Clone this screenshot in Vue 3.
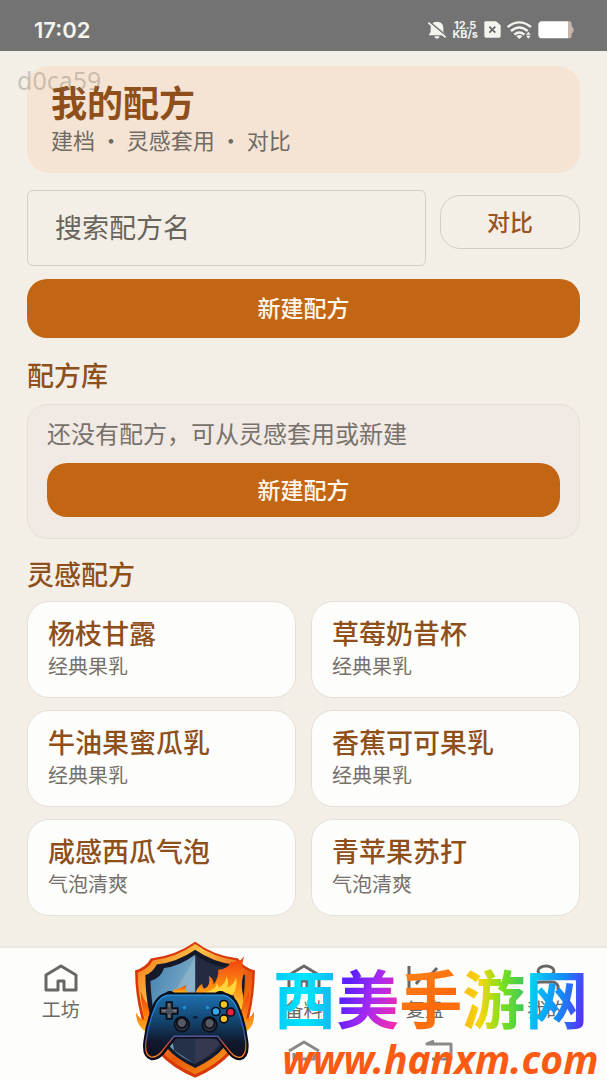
<script setup>
import { ref } from 'vue'

const keyword = ref('')

const recipes = [
  { name: '杨枝甘露', type: '经典果乳' },
  { name: '草莓奶昔杯', type: '经典果乳' },
  { name: '牛油果蜜瓜乳', type: '经典果乳' },
  { name: '香蕉可可果乳', type: '经典果乳' },
  { name: '咸感西瓜气泡', type: '气泡清爽' },
  { name: '青苹果苏打', type: '气泡清爽' },
]

const house = 'M3 11 L18 2 L33 11 V26 H21 V17 H15 V26 H3 Z'
const tabs = [
  { label: '工坊', icon: house },
  { label: '配方', icon: 'M8 3 H28 V26 H8 Z M13 10 H23 M13 16 H23' },
  { label: '备料', icon: house },
  { label: '复盘', icon: 'M2 2 V26 H34 M9 20 L16 11 L20 15 L30 4' },
  { label: '我的', icon: 'M18 2 A8 5 0 1 1 18 12 A8 5 0 1 1 18 2 M6 26 V22 Q8 18 12 18 H24 Q28 18 30 22 V26' },
]

const siteName = [
  { text: '西', tone: 'cyan' },
  { text: '美', tone: 'purple' },
  { text: '手', tone: 'orange' },
  { text: '游', tone: 'lime' },
  { text: '网', tone: 'blue' },
]
</script>

<template>
  <div class="page">
    <header class="status">
      <span class="time">17:02</span>
      <div class="indicators">
        <svg width="18" height="18" viewBox="0 0 54 54">
          <path d="M27 2 C40 2 46 11 46 20 V32 L53 43 H2 L8 32 V20 C8 11 14 2 27 2 Z M19 46 H35 Q34 53 27 53 Q20 53 19 46 Z" fill="#f4f3ee" />
          <path d="M4 2 L54 44" stroke="#737373" stroke-width="5" />
          <path d="M1 5 L53 49" stroke="#f4f3ee" stroke-width="5" />
        </svg>
        <span class="speed">12.5<br>KB/s</span>
        <svg width="17" height="17" viewBox="0 0 51 51">
          <path d="M5 1 H36 L50 13 V45 Q50 50 45 50 H6 Q1 50 1 45 V5 Q1 1 5 1 Z" fill="#f4f3ee" />
          <path d="M16 17 L34 35 M34 17 L16 35" stroke="#666" stroke-width="5" />
        </svg>
        <svg width="25" height="18" viewBox="0 0 75 54">
          <g fill="none" stroke="#f4f3ee" stroke-width="7">
            <path d="M2 18 Q37 -10 72 18" />
            <path d="M12 30 Q37 9 62 30" />
            <path d="M22 41 Q37 28 52 41" />
          </g>
          <path d="M28 46 Q37 38 46 46 L37 54 Z M57 41 L64 32 L71 41 Z M57 44 L64 53 L71 44 Z" fill="#f4f3ee" />
        </svg>
        <svg width="36" height="18" viewBox="0 0 108 54">
          <path d="M88 1 H94 Q101 1 101 8 V16 Q107 19 107 27 Q107 35 101 38 V45 Q101 52 94 52 H88 Z" fill="#c8b5ab" />
          <path d="M12 1 H90 V52 H12 Q1 52 1 41 V12 Q1 1 12 1 Z" fill="#fff" />
        </svg>
      </div>
    </header>

    <span class="device-mark">d0ca59</span>

    <main>
      <section class="hero">
        <h1>我的配方</h1>
        <p>建档 · 灵感套用 · 对比</p>
      </section>

      <div class="search">
        <input v-model="keyword" type="text" placeholder="搜索配方名" aria-label="搜索配方名">
        <button class="compare">对比</button>
      </div>

      <button class="primary large">新建配方</button>

      <h2>配方库</h2>
      <section class="empty">
        <p>还没有配方，可从灵感套用或新建</p>
        <button class="primary">新建配方</button>
      </section>

      <h2>灵感配方</h2>
      <div class="grid">
        <article v-for="r in recipes" :key="r.name" class="card">
          <h3>{{ r.name }}</h3>
          <p>{{ r.type }}</p>
        </article>
      </div>
    </main>

    <footer>
      <nav class="tabs">
        <a v-for="t in tabs" :key="t.label" href="#">
          <svg width="36" height="28" viewBox="0 0 36 28"><path :d="t.icon" /></svg>
          <span>{{ t.label }}</span>
        </a>
      </nav>
      <div class="system">
        <svg width="34" height="22" viewBox="0 0 34 22"><path d="M10 3 H26 M10 8 H26 M10 13 H26" /></svg>
        <svg width="34" height="22" viewBox="0 0 34 22"><path d="M2 11 L17 2 L32 11 M7 13 V19 H27 V13" /></svg>
        <svg width="34" height="22" viewBox="0 0 34 22"><path d="M12 1 L5 4 H29 V19 H10" /></svg>
      </div>

      <svg class="shield" viewBox="40 18 362 410">
        <defs>
          <linearGradient id="rim" x1="0" y1="0" x2="1" y2="1">
            <stop offset="0" stop-color="#f06a12" />
            <stop offset=".3" stop-color="#ffc34a" />
            <stop offset=".6" stop-color="#e8590c" />
            <stop offset="1" stop-color="#ffb21c" />
          </linearGradient>
          <linearGradient id="glass" x1="0" y1="0" x2="1" y2="1">
            <stop offset="0" stop-color="#3f7fae" />
            <stop offset=".6" stop-color="#7ba9c6" />
            <stop offset="1" stop-color="#34648c" />
          </linearGradient>
          <linearGradient id="flame" x1="0" y1="0" x2="0" y2="1">
            <stop offset="0" stop-color="#ef3b0c" />
            <stop offset=".5" stop-color="#ff8a12" />
            <stop offset="1" stop-color="#ffd83a" />
          </linearGradient>
          <linearGradient id="pad" x1="0" y1="0" x2="0" y2="1">
            <stop offset="0" stop-color="#1c6fae" />
            <stop offset=".4" stop-color="#144671" />
            <stop offset=".75" stop-color="#10192c" />
            <stop offset="1" stop-color="#0d1120" />
          </linearGradient>
          <linearGradient id="glow" x1="0" y1="0" x2="0" y2="1">
            <stop offset="0" stop-color="#2a98df" />
            <stop offset=".6" stop-color="#2659c8" />
            <stop offset=".85" stop-color="#f0501c" />
            <stop offset="1" stop-color="#ff8a2a" />
          </linearGradient>
        </defs>
        <path d="M223 20 Q278 62 352 70 Q366 96 402 106 Q400 180 386 240 Q360 370 223 427 Q84 370 60 240 Q44 180 43 106 Q76 96 90 70 Q164 62 223 20 Z" fill="#d83808" />
        <path d="M223 27 Q280 68 347 76 Q364 102 394 112 Q394 180 378 238 Q354 360 223 417 Q92 362 68 238 Q52 180 51 112 Q82 102 96 76 Q166 68 223 27 Z" fill="url(#rim)" />
        <path d="M46 232 Q56 252 74 256 Q62 220 60 170 Q76 214 104 222 L88 330 L76 290 Q46 272 46 232 Z M399 230 Q390 248 376 252 Q386 210 384 170 Q370 214 340 222 L370 330 L378 288 Q402 270 399 230 Z" fill="url(#flame)" />
        <path d="M223 44 Q278 82 338 88 Q350 112 372 120 Q372 180 360 232 Q340 344 223 398 Q106 344 86 232 Q74 180 74 120 Q96 112 108 88 Q168 82 223 44 Z" fill="#15192a" />
        <path d="M223 59 Q272 94 328 99 Q342 122 360 128 Q354 210 340 260 Q312 350 223 386 Z" fill="#222b40" />
        <path d="M223 59 Q174 94 130 99 Q120 130 89 138 Q92 210 106 260 Q134 350 223 386 Z" fill="url(#glass)" />
        <path d="M223 66 L156 180 H223 Z" fill="#afc8d6" opacity=".35" />
        <path d="M150 296 H296 L286 346 L223 386 L160 346 Z" fill="#253049" />
        <path d="M223 300 V384 Q272 364 300 318 Z" fill="#353850" />
        <path d="M140 176 Q152 176 162 162 Q174 164 196 150 Q190 166 206 178 Z" fill="url(#flame)" />
        <path d="M224 180 Q224 160 244 146 Q244 160 252 160 Q270 152 264 122 Q280 134 278 148 Q294 128 292 104 Q322 102 330 80 Q356 84 370 64 Q358 96 368 118 Q360 140 364 168 Q374 200 356 236 L338 180 Z" fill="url(#flame)" />
        <path d="M244 178 Q254 170 266 168 Q286 160 288 144 Q294 150 292 158 Q316 146 316 124 Q326 140 318 158 Q340 150 346 126 Q350 156 336 178 Z" fill="#ffd63c" />
        <path d="M136 172 Q146 164 160 172 H284 Q300 164 312 172 Q342 180 354 210 Q376 262 382 318 Q388 370 358 375 Q340 376 322 356 L286 310 H166 L130 356 Q110 378 90 374 Q62 366 68 318 Q74 262 96 210 Q108 180 136 172 Z" fill="#0b0e19" />
        <path d="M140 180 H308 Q334 186 346 214 Q368 266 374 318 Q378 362 356 366 Q342 367 328 350 L290 303 H160 L122 350 Q106 368 90 365 Q70 358 76 318 Q82 266 104 214 Q114 186 140 180 Z" fill="url(#pad)" stroke="url(#glow)" stroke-width="4" />
        <path d="M137 201 H154 V219 H171 V236 H154 V251 H137 V236 H119 V219 H137 Z" fill="#4c505a" stroke="#0b0e19" stroke-width="5" />
        <path d="M145 205 V215 M145 239 V247 M123 227 H134 M158 227 H167" stroke="#9298a1" stroke-width="3" />
        <g stroke="#0b0e19" stroke-width="5">
          <circle cx="183" cy="267" r="22" fill="#30343e" />
          <circle cx="266" cy="268" r="22" fill="#30343e" />
          <circle cx="183" cy="263" r="15" fill="#555963" />
          <circle cx="266" cy="264" r="15" fill="#555963" />
          <circle cx="309" cy="208" r="12" fill="#f8c51e" />
          <circle cx="285" cy="229" r="12" fill="#39a7ec" />
          <circle cx="329" cy="231" r="12" fill="#e72440" />
          <circle cx="309" cy="251" r="12" fill="#f8c51e" />
        </g>
        <circle cx="191" cy="217" r="5" fill="#1f91d5" />
        <circle cx="260" cy="217" r="5" fill="#1f91d5" />
        <rect x="216" y="243" width="15" height="7" rx="3" fill="#0b1d33" />
      </svg>
      <div class="site">
        <div class="site-name">
          <span v-for="s in siteName" :key="s.text" :class="s.tone">{{ s.text }}</span>
        </div>
        <div class="site-url">www.hanxm.com</div>
      </div>
    </footer>
  </div>
</template>

<style>
body {
  background: #f3efe7;
}
</style>

<style scoped>
.page {
  position: relative;
  display: flex;
  flex-direction: column;
  min-height: 100vh;
  background: #f3efe7;
  color: #706b64;
  font-family: "Noto Sans CJK SC", sans-serif;
}

* {
  box-sizing: border-box;
}

h1, h2, h3, p {
  margin: 0;
  color: #8f4f1b;
}

button, input {
  font-family: inherit;
}

.status {
  display: flex;
  align-items: center;
  justify-content: space-between;
  height: 51px;
  padding: 8px 33px 0 34px;
  background: #737373;
  color: #f4f3ee;
}

.time {
  font: 600 22px/24px Inter, sans-serif;
}

.indicators {
  display: flex;
  align-items: center;
  gap: 6px;
}

.speed {
  font: bold 11px/9px Inter, sans-serif;
  text-align: center;
}

.device-mark {
  position: absolute;
  top: 66px;
  left: 17px;
  color: rgba(120, 112, 100, 0.35);
  font: 25px/28px "Noto Sans", sans-serif;
}

main {
  flex: 1;
  padding: 15px 27px 30px;
}

.hero {
  padding: 14px 24px 18px;
  border-radius: 22px;
  background: #f5e4d3;
}

.hero h1 {
  font-size: 36px;
  line-height: 43px;
}

.hero p {
  color: #706b64;
  font-size: 22px;
  line-height: 32px;
}

.search {
  display: flex;
  align-items: center;
  gap: 14px;
  padding: 17px 0 13px;
}

.search input {
  flex: 1;
  min-width: 0;
  height: 76px;
  padding: 0 27px 3px;
  border: 1px solid #d3cebf;
  border-radius: 6px;
  background: transparent;
  color: #69645b;
  font-size: 27px;
}

.search input::placeholder {
  color: #69645b;
  opacity: 1;
}

.compare {
  width: 140px;
  height: 54px;
  margin-bottom: 12px;
  padding: 0 0 3px;
  border: 1px solid #d3cebf;
  border-radius: 20px;
  background: transparent;
  color: #9a551c;
  font-size: 23px;
  font-weight: 500;
}

.primary {
  display: block;
  width: 100%;
  height: 54px;
  padding: 0 0 3px;
  border: 0;
  border-radius: 20px;
  background: #c26614;
  color: #fff6ec;
  font-size: 23px;
  font-weight: 500;
}

.large {
  height: 59px;
}

h2 {
  padding: 19px 0 12px;
  font-size: 27px;
  font-weight: 500;
  line-height: 35px;
}

.empty {
  padding: 10px 19px 21px;
  border: 1px solid #e5dfd6;
  border-radius: 20px;
  background: #f1e9e3;
}

.empty p {
  margin-bottom: 13px;
  color: #77716b;
  font-size: 24px;
  line-height: 35px;
}

.empty + h2 {
  padding: 17px 0 10px;
}

.grid {
  display: grid;
  grid-template-columns: 1fr 1fr;
  gap: 12px 15px;
}

.card {
  padding: 13px 20px 16px;
  border: 1px solid #e5e1d8;
  border-radius: 22px;
  background: #fdfdfc;
}

.card h3 {
  font-size: 27px;
  font-weight: 500;
  line-height: 35px;
}

.card p {
  color: #77716b;
  font-size: 20px;
  line-height: 31px;
}

footer {
  position: relative;
  height: 134px;
  border-top: 2px solid #ebe8e1;
  background: #fdfdfc;
}

.tabs {
  display: flex;
  padding-top: 16px;
}

.tabs a {
  display: flex;
  flex: 1;
  flex-direction: column;
  align-items: center;
  gap: 4px;
  color: #6b6966;
  font-size: 19px;
  line-height: 26px;
  text-decoration: none;
}

svg path {
  stroke-linejoin: round;
}

.tabs path,
.system path {
  fill: none;
  stroke: #686766;
  stroke-width: 3;
}

.system {
  display: flex;
  justify-content: center;
  gap: 101px;
  padding-top: 18px;
}

.system path {
  stroke: #8c8a88;
}

.shield {
  position: absolute;
  bottom: 2px;
  left: 22%;
  width: 121px;
  height: 137px;
}

.site {
  position: absolute;
  top: 10px;
  left: 45%;
  white-space: nowrap;
}

.site-name {
  display: flex;
  font-size: 63px;
  font-weight: 700;
  line-height: 76px;
}

.site-name span {
  background-clip: text;
  color: transparent;
}

.cyan {
  background-image: linear-gradient(90deg, #08c8f4, #00e5ff 50%, #14b4f0);
}

.purple {
  background-image: linear-gradient(110deg, #5d20ff 25%, #a52af0 55%, #f02cb0 90%);
}

.orange {
  background-image: linear-gradient(150deg, #ff8a1c, #ff6a0a 60%, #ff7a10);
}

.lime {
  background-image: linear-gradient(90deg, #ffb812, #f2d80c 30%, #78e01c 65%, #3cc860);
}

.blue {
  background-image: linear-gradient(100deg, #08d4f6 10%, #128cf8 55%, #5a30f4 90%);
}

.site-url {
  padding: 5px 0 0 9px;
  color: #fb5a12;
  font: italic bold 39px/40px "Noto Sans", sans-serif;
}
</style>
